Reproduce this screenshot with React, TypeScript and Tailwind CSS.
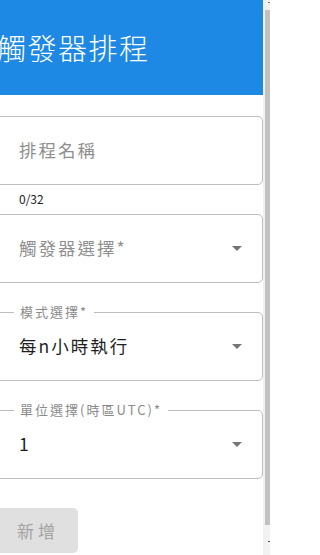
import React from "react";

const font = { fontFamily: '"Noto Sans CJK TC", "Noto Sans", sans-serif' };

function Arrow() {
  return (
    <svg width="10" height="5" viewBox="0 0 10 5" className="shrink-0">
      <path d="M0 0 L10 0 L5 5 Z" fill="#757575" />
    </svg>
  );
}

function Outlined({ label, value, placeholder, select }: { label?: string; value?: string; placeholder?: string; select?: boolean }) {
  return (
    <div className="relative -ml-[8px] h-[69px] w-[271px] rounded-[5px] border border-[#bdbdbd] bg-white flex items-center pl-[26px] pr-[20px]">
      {label && (
        <div className="absolute -top-[9px] left-[21px] bg-white px-[6px] text-[13px] leading-[16px] tracking-[2px] text-[#8a8a8a]">
          {label}
        </div>
      )}
      <div className={`flex-1 text-[17.5px] tracking-[2px] ${value ? "text-[#1f1f1f]" : "text-[#8f8f8f]"}`}>
        {value ?? placeholder}
      </div>
      {select && <Arrow />}
    </div>
  );
}

export default function App() {
  return (
    <div className="flex h-[555px] w-[270px] overflow-hidden bg-white" style={font}>
      <div className="flex w-[263px] flex-col">
        <div className="flex h-[95px] shrink-0 items-center bg-[#1e88e5] -ml-[3px]">
          <span className="text-[29px] tracking-[1.5px] text-white font-light">觸發器排程</span>
        </div>
        <div className="mt-[21px] flex flex-col">
          <Outlined placeholder="排程名稱" />
          <div className="h-[29px] pl-[19px] pt-[7px] text-[12px] leading-[14px] text-[#222]">0/32</div>
          <Outlined placeholder="觸發器選擇*" select />
          <div className="h-[29px]" />
          <Outlined label="模式選擇*" value="每n小時執行" select />
          <div className="h-[29px]" />
          <Outlined label="單位選擇(時區UTC)*" value="1" select />
          <div className="h-[29px]" />
          <div className="-ml-[4px] flex h-[45px] w-[82px] items-center justify-center rounded-[5px] bg-[#e0e0e0] pl-[2px] text-[17px] tracking-[4px] text-[#a3a3a3]">
            新增
          </div>
        </div>
      </div>
      <div className="relative flex w-[7px] flex-col bg-[#f1f1f1]">
        <div className="h-[10px]" />
        <div className="ml-[2px] h-[515px] w-[5px] bg-[#c1c1c1]" />
        <div className="absolute left-[5px] top-[541px] h-[1px] w-[2px] bg-[#555]" />
        <div className="absolute left-[5px] top-[2px] h-[1px] w-[2px] bg-[#777]" />
      </div>
    </div>
  );
}
